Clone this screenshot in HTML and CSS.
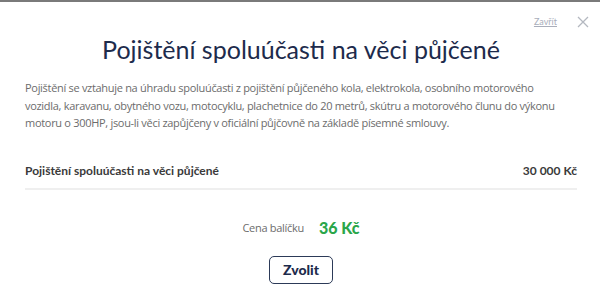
FILE: index.html
```html
<!DOCTYPE html>
<html lang="cs">
<head>
<meta charset="utf-8">
<link rel="stylesheet" href="styles.css">
</head>
<body>
<div class="topbar"></div>
<div class="modal">
  <div class="close-row">
    <a class="close-link" href="#">Zavřít</a>
    <svg class="close-x" width="12" height="12" viewBox="0 0 12 12"><path d="M1 1L11 11M11 1L1 11" stroke="#b4b8c0" stroke-width="1.3" fill="none"/></svg>
  </div>
  <h1 class="title">Pojištění spoluúčasti na věci půjčené</h1>
  <p class="desc">Pojištění se vztahuje na úhradu spoluúčasti z pojištění půjčeného kola, elektrokola, osobního motorového vozidla, karavanu, obytného vozu, motocyklu, plachetnice do 20 metrů, skútru a motorového člunu do výkonu motoru o 300HP, jsou-li věci zapůjčeny v oficiální půjčovně na základě písemné smlouvy.</p>
  <div class="row">
    <span class="row-label">Pojištění spoluúčasti na věci půjčené</span>
    <span class="row-value">30 000 Kč</span>
  </div>
  <div class="price">
    <span class="price-label">Cena balíčku</span>
    <span class="price-value">36 Kč</span>
  </div>
  <div class="actions">
    <button class="btn">Zvolit</button>
  </div>
</div>
</body>
</html>
```
FILE: styles.css
```css
* { box-sizing: border-box; }
html, body { margin: 0; padding: 0; background: #fff; }
body { font-family: "Lato", "Open Sans", sans-serif; width: 600px; height: 305px; overflow: hidden; }
.topbar { height: 2px; background: #7a7a7a; }
.modal { padding: 0 23px 0 25px; }
.close-row { display: flex; justify-content: flex-end; align-items: center; gap: 20px; height: 26px; padding-top: 13px; margin-right: -12px; }
.close-link { font-size: 9px; color: #a9aebb; text-decoration: underline; }
.close-x { display: block; }
.title { margin: 4px 0 0; text-align: center; font-family: "Lato", sans-serif; font-weight: 400; font-size: 25px; line-height: 34px; color: #1d2b4c; }
.desc { margin: 13px 22px 0 0; font-family: "Open Sans", sans-serif; font-size: 11px; letter-spacing: -0.3px; line-height: 17.5px; color: #6c6c6c; }
.row { display: flex; justify-content: space-between; align-items: center; margin-top: 31px; padding-bottom: 9px; border-bottom: 2px solid #efefef; }
.row-label, .row-value { font-size: 12px; font-weight: 700; color: #3a3a3a; line-height: 16px; }
.price { display: flex; justify-content: center; align-items: center; gap: 15px; margin-top: 28px; }
.price-label { font-family: "Open Sans", sans-serif; font-size: 11px; letter-spacing: -0.3px; color: #6c6c6c; }
.price-value { font-size: 16px; font-weight: 900; color: #2aa64a; }
.actions { display: flex; justify-content: center; margin-top: 19px; }
.btn { font-family: "Lato", sans-serif; font-weight: 900; font-size: 14px; color: #1d2b4c; background: #fff; border: 1.5px solid #2c3a58; border-radius: 5px; width: 64px; height: 28px; padding: 0; }
```
